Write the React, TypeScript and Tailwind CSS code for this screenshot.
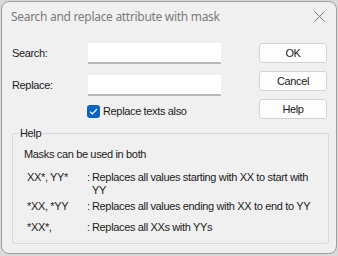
export default function App() {
  const font = { fontFamily: '"Liberation Sans", Arial, sans-serif' };
  return (
    <div className="w-[338px] h-[256px] bg-[#d9d9d9] p-px" style={font}>
      <div className="w-[336px] h-[253px] rounded-[8px] border border-[#9f9f9f] bg-[#f0f0f0] flex flex-col overflow-hidden">
        {/* title bar */}
        <div className="h-[30px] flex items-center justify-between pl-[9px] pr-[11px]">
          <span
            className="text-[12px] text-[#7b7b7b] tracking-[-0.3px]"
            style={{ fontFamily: '"Noto Sans", "Open Sans", sans-serif' }}
          >
            Search and replace attribute with mask
          </span>
          <svg width="11" height="11" viewBox="0 0 11 11" className="mb-px">
            <path d="M0.5 0.5 L10.5 10.5 M10.5 0.5 L0.5 10.5" stroke="#7a7a7a" strokeWidth="1" />
          </svg>
        </div>

        {/* fields and buttons */}
        <div className="flex pl-[10px] pt-[11px] text-[11px] tracking-[-0.35px] text-[#1b1b1b]">
          <div className="flex flex-col">
            <div className="flex items-center h-[21px]">
              <span className="w-[76px]">Search:</span>
              <div className="w-[133px] h-[21px] bg-white border-b-2 border-[#b9b9b9]" />
            </div>
            <div className="flex items-center h-[21px] mt-[11px]">
              <span className="w-[76px]">Replace:</span>
              <div className="w-[133px] h-[21px] bg-white border-b-2 border-[#b9b9b9]" />
            </div>
            <div className="flex items-center mt-[7px] pl-[75px] gap-[3px]">
              <div className="w-[13px] h-[13px] rounded-[3px] bg-[#0a64c4] flex items-center justify-center">
                <svg width="9" height="7" viewBox="0 0 9 7">
                  <path d="M1 3.6 L3.3 5.8 L8 1" stroke="white" strokeWidth="1.2" fill="none" />
                </svg>
              </div>
              <span>Replace texts also</span>
            </div>
          </div>
          <div className="flex flex-col gap-[8px] ml-[38px]">
            <button className="w-[68px] h-[20px] bg-[#fdfdfd] border border-[#d3d3d3] rounded-[3px]">OK</button>
            <button className="w-[68px] h-[20px] bg-[#fdfdfd] border border-[#d3d3d3] rounded-[3px]">Cancel</button>
            <button className="w-[68px] h-[20px] bg-[#fdfdfd] border border-[#d3d3d3] rounded-[3px]">Help</button>
          </div>
        </div>

        {/* help group */}
        <fieldset className="ml-[10px] mt-[7px] w-[317px] h-[117px] border border-[#d8d8d8] rounded-[2px] px-[11px] text-[11px] tracking-[-0.35px] text-[#1b1b1b] whitespace-nowrap">
          <legend className="ml-[-5px] px-[1px] leading-[13px]">Help</legend>
          <div className="mt-[8px] leading-[13px]">Masks can be used in both</div>
          <div className="flex mt-[10px] pl-[3px] leading-[13px]">
            <span className="w-[60px]">XX*, YY*</span>
            <span className="w-[5px]">:</span>
            <span>
              Replaces all values starting with XX to start with
              <br />
              YY
            </span>
          </div>
          <div className="flex mt-[3px] pl-[3px] leading-[13px]">
            <span className="w-[60px]">*XX, *YY</span>
            <span className="w-[5px]">:</span>
            <span>Replaces all values ending with XX to end to YY</span>
          </div>
          <div className="flex mt-[8px] pl-[3px] leading-[13px]">
            <span className="w-[60px]">*XX*,</span>
            <span className="w-[5px]">:</span>
            <span>Replaces all XXs with YYs</span>
          </div>
        </fieldset>
      </div>
    </div>
  );
}
